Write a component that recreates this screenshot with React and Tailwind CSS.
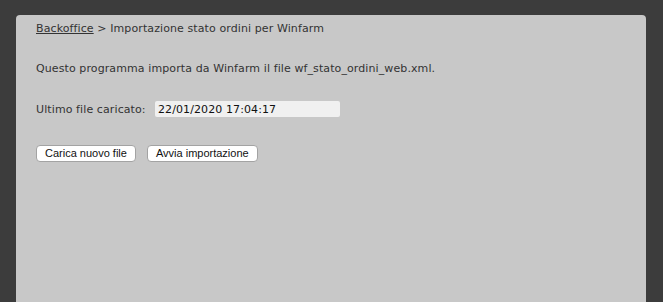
export default function App() {
  return (
    <div className="h-[302px] bg-[#3c3c3c] pt-[15px] pl-[16px] pr-[17px] overflow-hidden">
      <div className="h-full bg-[#c8c8c8] rounded-t-[4px] pl-[20px] pt-[7px] text-[11px] leading-[13px] tracking-[0.1px] text-[#333333] font-['DejaVu_Sans',Verdana,sans-serif]">
        <div>
          <a href="#" className="underline text-[#333333]">Backoffice</a> &gt; Importazione stato ordini per Winfarm
        </div>

        <p className="mt-[27px]">Questo programma importa da Winfarm il file wf_stato_ordini_web.xml.</p>

        <div className="mt-[26px] flex items-center">
          <span className="w-[119px]">Ultimo file caricato:</span>
          <input
            type="text"
            readOnly
            value="22/01/2020 17:04:17"
            className="w-[185px] h-[16px] bg-[#f0f0f0] rounded-[2px] px-[3px] text-[11px] tracking-[0.1px] text-[#111111] outline-none font-['DejaVu_Sans',Verdana,sans-serif]"
          />
        </div>

        <div className="mt-[28px] flex gap-[11px]">
          <button className="h-[17px] px-[8px] bg-white border border-[#a3a3a3] rounded-[4px] text-[11px] leading-[15px] tracking-normal text-[#111111] font-['Liberation_Sans',Arial,sans-serif]">
            Carica nuovo file
          </button>
          <button className="h-[17px] px-[8px] bg-white border border-[#a3a3a3] rounded-[4px] text-[11px] leading-[15px] tracking-normal text-[#111111] font-['Liberation_Sans',Arial,sans-serif]">
            Avvia importazione
          </button>
        </div>
      </div>
    </div>
  );
}
